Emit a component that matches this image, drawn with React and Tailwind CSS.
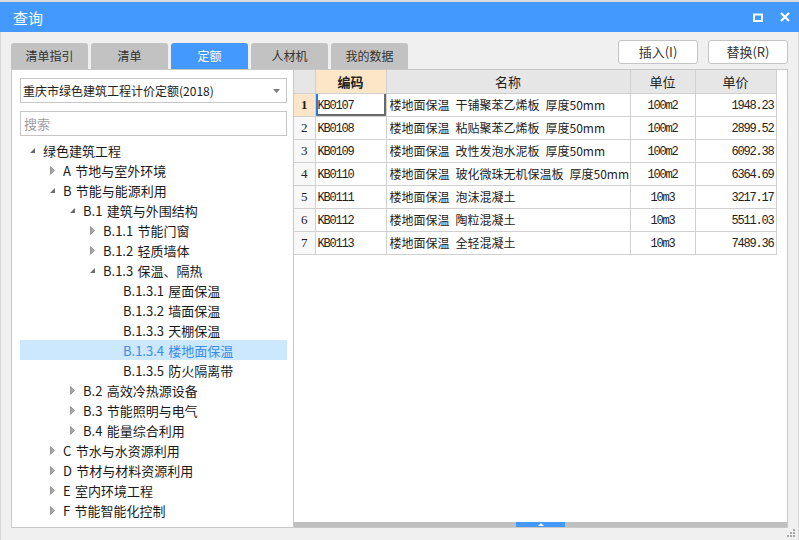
import React from "react";

const FONT = { fontFamily: '"Noto Sans CJK SC", "Noto Sans", sans-serif' };
const MONO = { fontFamily: '"Liberation Mono", "DejaVu Sans Mono", monospace' };

const S = "\u2004";
const tree = [
  ["绿色建筑工程", 0, "open"],
  ["A" + S + "节地与室外环境", 1, "closed"],
  ["B" + S + "节能与能源利用", 1, "open"],
  ["B.1" + S + "建筑与外围结构", 2, "open"],
  ["B.1.1" + S + "节能门窗", 3, "closed"],
  ["B.1.2" + S + "轻质墙体", 3, "closed"],
  ["B.1.3" + S + "保温、隔热", 3, "open"],
  ["B.1.3.1" + S + "屋面保温", 4, "leaf"],
  ["B.1.3.2" + S + "墙面保温", 4, "leaf"],
  ["B.1.3.3" + S + "天棚保温", 4, "leaf"],
  ["B.1.3.4" + S + "楼地面保温", 4, "leaf", true],
  ["B.1.3.5" + S + "防火隔离带", 4, "leaf"],
  ["B.2" + S + "高效冷热源设备", 2, "closed"],
  ["B.3" + S + "节能照明与电气", 2, "closed"],
  ["B.4" + S + "能量综合利用", 2, "closed"],
  ["C" + S + "节水与水资源利用", 1, "closed"],
  ["D" + S + "节材与材料资源利用", 1, "closed"],
  ["E" + S + "室内环境工程", 1, "closed"],
  ["F" + S + "节能智能化控制", 1, "closed"],
];

const PADS = ["pl-[8px]", "pl-[28px]", "pl-[48px]", "pl-[68px]", "pl-[88px]"];

const rows = [
  ["KB0107", "楼地面保温\u2002干铺聚苯乙烯板\u2002厚度50mm", "100m2", "1948.23"],
  ["KB0108", "楼地面保温\u2002粘贴聚苯乙烯板\u2002厚度50mm", "100m2", "2899.52"],
  ["KB0109", "楼地面保温\u2002改性发泡水泥板\u2002厚度50mm", "100m2", "6092.38"],
  ["KB0110", "楼地面保温\u2002玻化微珠无机保温板\u2002厚度50mm", "100m2", "6364.69"],
  ["KB0111", "楼地面保温\u2002泡沫混凝土", "10m3", "3217.17"],
  ["KB0112", "楼地面保温\u2002陶粒混凝土", "10m3", "5511.03"],
  ["KB0113", "楼地面保温\u2002全轻混凝土", "10m3", "7489.36"],
];

function Arrow({ state }) {
  if (state === "open")
    return (
      <svg width="8" height="8" viewBox="0 0 8 8" className="ml-[1px] mt-[2px]">
        <polygon points="6,1 6,6 1,6" fill="#6b6b6b" />
      </svg>
    );
  if (state === "closed")
    return (
      <svg width="8" height="9" viewBox="0 0 8 9" className="ml-[1px]">
        <polygon points="1.5,0.5 5.5,4.5 1.5,8.5" fill="#a6a6a6" stroke="#8c8c8c" strokeWidth="0.8" />
      </svg>
    );
  return null;
}

export default function App() {
  const tabs = ["清单指引", "清单", "定额", "人材机", "我的数据"];
  return (
    <div className="w-[799px] h-[540px] bg-[#f0f0f0] flex flex-col overflow-hidden text-[#222]" style={FONT}>
      <div className="h-[2px] bg-[#dcdcdc]" />
      <div className="h-[30px] bg-[#4499ff] flex items-center pl-[13px] pr-[9px] text-white">
        <span className="text-[15px] leading-none">查询</span>
        <div className="ml-auto flex items-center gap-[17px]">
          <svg width="10" height="9" viewBox="0 0 10 9">
            <rect x="1" y="1.5" width="8" height="6.5" fill="none" stroke="white" strokeWidth="2" />
          </svg>
          <svg width="10" height="10" viewBox="0 0 10 10">
            <path d="M1 1 L9 9 M9 1 L1 9" stroke="white" strokeWidth="2.2" />
          </svg>
        </div>
      </div>
      <div className="flex-1 flex flex-col px-[10px] border-x border-[#d6d6d6]">
        <div className="h-[37px] pt-[8px] flex">
          <div className="flex items-end gap-[3px] h-[29px]">
            {tabs.map((t, i) => (
              <div
                key={t}
                className={
                  "w-[77px] h-[26px] rounded-t-[3px] flex items-center justify-center text-[12px] " +
                  (i === 2 ? "bg-[#4499ff] text-white" : "bg-[#c2c2c2] text-[#333]")
                }
              >
                {t}
              </div>
            ))}
          </div>
          <div className="ml-auto flex gap-[10px] items-start">
            <button className="w-[80px] h-[24px] bg-white border border-[#c4c4c4] rounded-[3px] text-[13px] text-[#333] flex items-center justify-center">
              插入(I)
            </button>
            <button className="w-[80px] h-[24px] bg-white border border-[#c4c4c4] rounded-[3px] text-[13px] text-[#333] flex items-center justify-center">
              替换(R)
            </button>
          </div>
        </div>
        <div className="h-[459px] flex">
          <div className="w-[283px] border border-[#c8c8c8] bg-white flex flex-col pt-[8px] pl-[8px] pr-[6px]">
            <div className="h-[25px] border border-[#c6c6c6] flex items-center pl-[2px] pr-[6px] text-[12px] text-[#222]">
              <span>重庆市绿色建筑工程计价定额(2018)</span>
              <svg width="7" height="4" viewBox="0 0 7 4" className="ml-auto">
                <polygon points="0,0 7,0 3.5,4" fill="#7a7a7a" />
              </svg>
            </div>
            <div className="h-[25px] mt-[8px] border border-[#c6c6c6] flex items-center pl-[3px] text-[13px] text-[#a0a0a0]">
              搜索
            </div>
            <div className="mt-[4px] flex flex-col">
              {tree.map(([label, level, state, sel]) => (
                <div
                  key={label}
                  className={
                    "h-[20px] flex items-center text-[13px] leading-none " +
                    PADS[level] +
                    (sel ? " bg-[#cce8ff] text-[#3a8ce6]" : " text-[#1a1a1a]")
                  }
                >
                  <div className="w-[15px] flex items-center">
                    <Arrow state={state} />
                  </div>
                  <span className="whitespace-pre">{label}</span>
                </div>
              ))}
            </div>
          </div>
          <div className="flex-1 border-y border-r border-[#c8c8c8] bg-white flex flex-col">
            <div className="flex-1">
              <table className="border-collapse table-fixed text-[12px]">
                <colgroup>
                  <col className="w-[21px]" />
                  <col className="w-[71px]" />
                  <col className="w-[244px]" />
                  <col className="w-[65px]" />
                  <col className="w-[81px]" />
                </colgroup>
                <thead>
                  <tr className="h-[23px] text-[13px]">
                    <th className="bg-[#e6e6e6] border-r border-b border-[#d0d0d0] p-0" />
                    <th className="bg-[#fde6c8] border-r border-b border-[#d0d0d0] p-0 font-bold text-[#222]">编码</th>
                    <th className="bg-[#e6e6e6] border-r border-b border-[#d0d0d0] p-0 font-normal">名称</th>
                    <th className="bg-[#e6e6e6] border-r border-b border-[#d0d0d0] p-0 font-normal">单位</th>
                    <th className="bg-[#e6e6e6] border-r border-b border-[#d0d0d0] p-0 font-normal">单价</th>
                  </tr>
                </thead>
                <tbody>
                  {rows.map((r, i) => (
                    <tr key={r[0]} className="h-[23px]">
                      <td
                        className={
                          "border-r border-b border-[#d0d0d0] p-0 text-center text-[13px] " +
                          (i === 0 ? "bg-[#fde6c8] font-bold" : "bg-[#f8f8f8]")
                        }
                        style={{ fontFamily: '"Liberation Serif", serif' }}
                      >
                        {i + 1}
                      </td>
                      <td
                        className={
                          "border-r border-b border-[#d0d0d0] p-0 pl-[2px] pt-[2px] text-[12px] tracking-[-1.2px] " +
                          (i === 0 ? "shadow-[inset_2px_0_0_#1e7bf0,inset_-2px_-2px_0_#6a6a6a]" : "")
                        }
                        style={MONO}
                      >
                        {r[0]}
                      </td>
                      <td className="border-r border-b border-[#d0d0d0] p-0 pl-[3px] whitespace-pre">{r[1]}</td>
                      <td className="border-r border-b border-[#d0d0d0] p-0 pt-[2px] text-center text-[12px] tracking-[-1.2px]" style={MONO}>
                        {r[2]}
                      </td>
                      <td className="border-r border-b border-[#d0d0d0] p-0 pt-[2px] pr-[2px] text-right text-[12px] tracking-[-1.2px]" style={MONO}>
                        {r[3]}
                      </td>
                    </tr>
                  ))}
                </tbody>
              </table>
            </div>
            <div className="h-[5px] bg-[#c0c0c0] flex justify-center">
              <div className="w-[49px] h-[5px] bg-[#4499ff] flex items-center justify-center">
                <svg width="6" height="3" viewBox="0 0 6 3">
                  <polygon points="3,0 6,3 0,3" fill="white" />
                </svg>
              </div>
            </div>
          </div>
        </div>
        <div className="flex-1 flex justify-end items-start pt-[1px] -mr-[8px]">
          <svg width="9" height="9" viewBox="0 0 9 9">
            <rect x="6" y="0" width="2" height="2" fill="#a8a8a8" />
            <rect x="3" y="3" width="2" height="2" fill="#a8a8a8" />
            <rect x="6" y="3" width="2" height="2" fill="#a8a8a8" />
            <rect x="0" y="6" width="2" height="2" fill="#a8a8a8" />
            <rect x="3" y="6" width="2" height="2" fill="#a8a8a8" />
            <rect x="6" y="6" width="2" height="2" fill="#a8a8a8" />
          </svg>
        </div>
      </div>
    </div>
  );
}
